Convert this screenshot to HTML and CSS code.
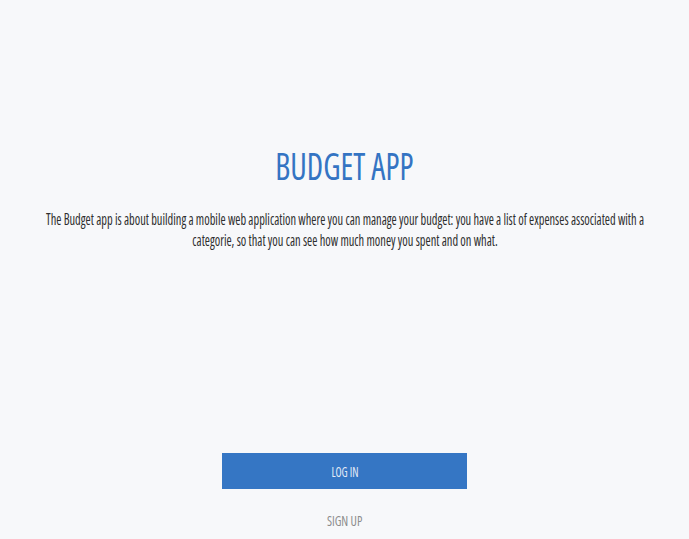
FILE: index.html
```html
<!DOCTYPE html>
<html>
<head>
<meta charset="utf-8">
<link rel="stylesheet" href="styles.css">
</head>
<body>
<main class="page">
  <section class="intro">
    <h1 class="title">BUDGET APP</h1>
    <p class="desc">The Budget app is about building a mobile web application where you can manage your budget: you have a list of expenses associated with a categorie, so that you can see how much money you spent and on what.</p>
  </section>
  <section class="actions">
    <button class="btn-login"><span class="btn-label">LOG IN</span></button>
    <a class="signup" href="#">SIGN UP</a>
  </section>
</main>
</body>
</html>
```
FILE: styles.css
```css
html, body {
  margin: 0;
  padding: 0;
}
body {
  background: #f7f8fa;
  font-family: "Open Sans", "DejaVu Sans", sans-serif;
  font-stretch: 75%;
  overflow: hidden;
}
.page {
  height: 539px;
  display: flex;
  flex-direction: column;
  align-items: center;
  box-sizing: border-box;
  padding: 145px 0 0;
  overflow: hidden;
}
.intro {
  display: flex;
  flex-direction: column;
  align-items: center;
  text-align: center;
}
.title {
  margin: 0;
  font-size: 39px;
  line-height: 39px;
  font-weight: 400;
  color: #3474c3;
  transform: scaleX(0.82);
}
.desc {
  flex: none;
  width: 800px;
  margin: 25px 0 0;
  font-size: 16px;
  line-height: 21px;
  color: #2e2e2e;
  transform: scaleX(0.775);
}
.actions {
  margin-top: auto;
  display: flex;
  flex-direction: column;
  align-items: center;
  padding-bottom: 11px;
}
.btn-login {
  width: 245px;
  height: 36px;
  padding: 0;
  border: none;
  background: #3576c4;
  color: #e6ecf7;
  font-family: inherit;
  font-stretch: 75%;
  font-size: 14px;
  font-weight: 400;
}
.btn-label {
  display: inline-block;
  transform: scaleX(0.8);
}
.signup {
  display: inline-block;
  margin-top: 24px;
  font-size: 15px;
  line-height: 15px;
  font-weight: 400;
  color: #8c8c8c;
  text-decoration: none;
  transform: scaleX(0.82);
}
```
